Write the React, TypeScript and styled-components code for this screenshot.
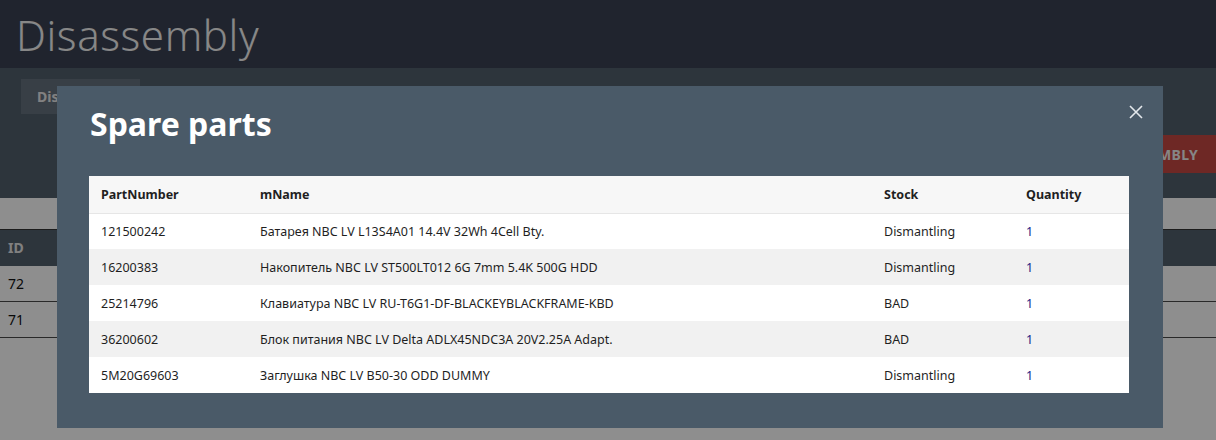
import React from "react";
import styled, { createGlobalStyle } from "styled-components";

const Global = createGlobalStyle`
  html, body { margin: 0; padding: 0; background: #ffffff; }
  body { font-family: "Noto Sans", "Liberation Sans", sans-serif; width: 1216px; height: 440px; overflow: hidden; }
  * { box-sizing: border-box; }
`;

const Page = styled.div`
  position: relative;
  width: 1216px;
  height: 440px;
  overflow: hidden;
  background: #ffffff;
`;

const Header = styled.header`
  height: 68px;
  background: #3b4253;
  display: flex;
  align-items: center;
  padding-left: 16px;
`;

const PageTitle = styled.h1`
  margin: 0;
  font-family: "Noto Sans", sans-serif;
  font-weight: 300;
  font-size: 42px;
  color: #f2f2f2;
  letter-spacing: 0.6px;
`;

const Band = styled.div`
  height: 130px;
  background: #515f6c;
  padding: 11px 0 0 21px;
  display: flex;
  flex-direction: column;
`;

const Tab = styled.div`
  width: 119px;
  height: 35px;
  background: #66727e;
  color: #e8e8e8;
  font-weight: 700;
  font-size: 14px;
  display: flex;
  align-items: center;
  padding-left: 16px;
`;

const Actions = styled.div`
  display: flex;
  justify-content: flex-end;
  margin-top: 21px;
`;

const RedButton = styled.div`
  height: 38px;
  background: #c54844;
  color: #f0f0f0;
  font-weight: 700;
  font-size: 14px;
  display: flex;
  align-items: center;
  padding: 0 18px;
  letter-spacing: 0.3px;
`;

const Spacer = styled.div`
  height: 31px;
`;

const BgTable = styled.table`
  width: 100%;
  border-collapse: collapse;
  font-size: 14px;
`;

const BgTh = styled.th`
  text-align: left;
  height: 36px;
  background: #515f6c;
  color: #e6e6e6;
  font-weight: 700;
  padding-left: 8px;
  border-top: 1px solid #333;
`;

const BgTd = styled.td`
  height: 36px;
  padding-left: 8px;
  color: #111;
  border-bottom: 1px solid #4a4a4a;
`;

const Overlay = styled.div`
  position: absolute;
  inset: 0;
  background: rgba(0, 0, 0, 0.443);
`;

const Modal = styled.div`
  position: absolute;
  left: 57px;
  top: 86px;
  width: 1106px;
  height: 342px;
  background: #4a5a68;
  padding: 18px 34px 0 32px;
`;

const ModalTitle = styled.h2`
  margin: 0 0 32px 1px;
  font-family: "Noto Sans", sans-serif;
  font-weight: 700;
  font-size: 32px;
  line-height: 40px;
  color: #ffffff;
`;

const Close = styled.button`
  position: absolute;
  top: 16px;
  right: 17px;
  width: 20px;
  height: 20px;
  padding: 0;
  border: none;
  background: transparent;
  display: flex;
  align-items: center;
  justify-content: center;
  cursor: pointer;
`;

const Table = styled.table`
  width: 100%;
  border-collapse: collapse;
  font-family: "Noto Sans", sans-serif;
  font-size: 12.5px;
  color: #1f1f1f;
`;

const Th = styled.th<{ $w?: number }>`
  text-align: left;
  font-weight: 700;
  height: 37px;
  padding: 0 12px;
  background: #f7f7f7;
  border-bottom: 1px solid #e6e6e6;
  ${(p) => (p.$w ? `width: ${p.$w}px;` : "")}
`;

const Tr = styled.tr<{ $alt: boolean }>`
  background: ${(p) => (p.$alt ? "#f1f1f1" : "#ffffff")};
`;

const Td = styled.td<{ $link?: boolean }>`
  height: 36px;
  padding: 0 12px;
  color: ${(p) => (p.$link ? "#1c2585" : "#1f1f1f")};
`;

const rows = [
  ["121500242", "Батарея NBC LV L13S4A01 14.4V 32Wh 4Cell Bty.", "Dismantling", "1"],
  ["16200383", "Накопитель NBC LV ST500LT012 6G 7mm 5.4K 500G HDD", "Dismantling", "1"],
  ["25214796", "Клавиатура NBC LV RU-T6G1-DF-BLACKEYBLACKFRAME-KBD", "BAD", "1"],
  ["36200602", "Блок питания NBC LV Delta ADLX45NDC3A 20V2.25A Adapt.", "BAD", "1"],
  ["5M20G69603", "Заглушка NBC LV B50-30 ODD DUMMY", "Dismantling", "1"],
];

export default function App() {
  return (
    <Page>
      <Global />
      <Header>
        <PageTitle>Disassembly</PageTitle>
      </Header>
      <Band>
        <Tab>Disassembly</Tab>
        <Actions>
          <RedButton>NEW DISASSEMBLY</RedButton>
        </Actions>
      </Band>
      <Spacer />
      <BgTable>
        <thead>
          <tr>
            <BgTh>ID</BgTh>
          </tr>
        </thead>
        <tbody>
          <tr>
            <BgTd>72</BgTd>
          </tr>
          <tr>
            <BgTd>71</BgTd>
          </tr>
        </tbody>
      </BgTable>
      <Overlay />
      <Modal>
        <Close aria-label="close">
          <svg width="14" height="14" viewBox="0 0 14 14">
            <path d="M1 1 L13 13 M13 1 L1 13" stroke="#e4e8ec" strokeWidth="1.6" />
          </svg>
        </Close>
        <ModalTitle>Spare parts</ModalTitle>
        <Table>
          <thead>
            <tr>
              <Th $w={159}>PartNumber</Th>
              <Th $w={624}>mName</Th>
              <Th $w={142}>Stock</Th>
              <Th>Quantity</Th>
            </tr>
          </thead>
          <tbody>
            {rows.map((r, i) => (
              <Tr key={r[0]} $alt={i % 2 === 1}>
                <Td>{r[0]}</Td>
                <Td>{r[1]}</Td>
                <Td>{r[2]}</Td>
                <Td $link>{r[3]}</Td>
              </Tr>
            ))}
          </tbody>
        </Table>
      </Modal>
    </Page>
  );
}
